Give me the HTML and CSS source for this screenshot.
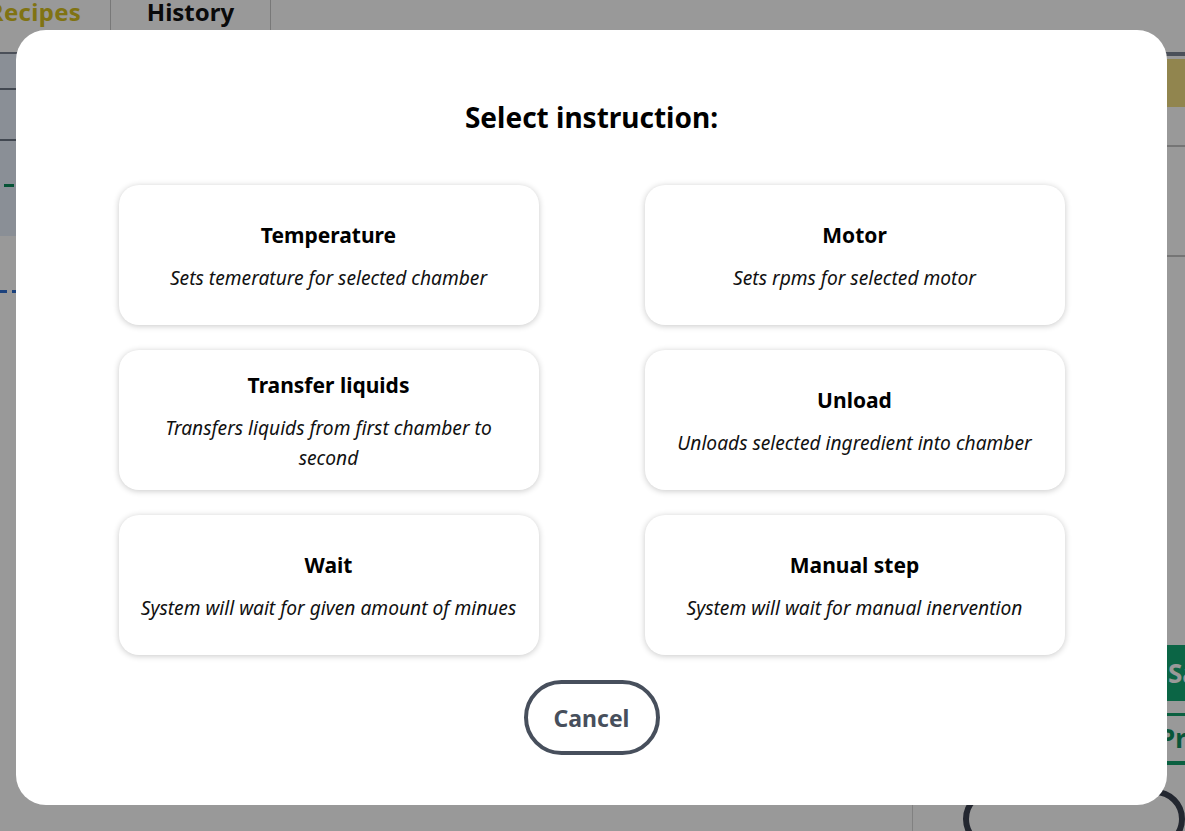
FILE: index.html
```html
<!DOCTYPE html>
<html lang="en">
<head>
<meta charset="utf-8">
<title>Select instruction</title>
<link rel="stylesheet" href="styles.css">
</head>
<body>
<div class="app">
  <nav class="tabs">
    <div class="tab tab-active">Recipes</div>
    <div class="tab">History</div>
    <div class="tab-rest"></div>
  </nav>
  <div class="content">
    <aside class="left">
      <div class="left-card">
        <div class="left-row"></div>
        <div class="left-row"></div>
        <div class="left-row left-row-last"><span class="dash-green"></span></div>
      </div>
      <div class="dash-blue"></div>
    </aside>
    <main class="main"></main>
    <aside class="right">
      <div class="right-top"></div>
      <div class="gold"></div>
      <div class="right-row"></div>
      <div class="right-row right-row-tall"></div>
      <div class="right-spacer"></div>
      <div class="save">Save</div>
      <div class="preview">Preview</div>
      <div class="dark-btn"></div>
    </aside>
  </div>
</div>

<div class="overlay">
  <div class="modal">
    <h2 class="modal-title">Select instruction:</h2>
    <div class="options">
      <div class="option">
        <div class="option-title">Temperature</div>
        <div class="option-desc">Sets temerature for selected chamber</div>
      </div>
      <div class="option">
        <div class="option-title">Motor</div>
        <div class="option-desc">Sets rpms for selected motor</div>
      </div>
      <div class="option">
        <div class="option-title">Transfer liquids</div>
        <div class="option-desc">Transfers liquids from first chamber to second</div>
      </div>
      <div class="option">
        <div class="option-title">Unload</div>
        <div class="option-desc">Unloads selected ingredient into chamber</div>
      </div>
      <div class="option">
        <div class="option-title">Wait</div>
        <div class="option-desc">System will wait for given amount of minues</div>
      </div>
      <div class="option">
        <div class="option-title">Manual step</div>
        <div class="option-desc">System will wait for manual inervention</div>
      </div>
    </div>
    <div class="actions">
      <button class="cancel" type="button">Cancel</button>
    </div>
  </div>
</div>
</body>
</html>
```

FILE: styles.css
```css
* { box-sizing: border-box; }

html, body {
  margin: 0;
  padding: 0;
  height: 100%;
  overflow: hidden;
}

body {
  font-family: "Noto Sans", "Open Sans", sans-serif;
  background: #ffffff;
  color: #000;
}

/* ---------- background app ---------- */
.app {
  height: 100%;
  display: flex;
  flex-direction: column;
}

.tabs {
  display: flex;
  height: 54px;
  border-bottom: 2px solid #7d8594;
  margin-left: -49px;
}

.tab {
  width: 160px;
  display: flex;
  justify-content: center;
  align-items: flex-start;
  font-size: 24px;
  font-weight: 700;
  line-height: 24px;
  border-right: 1px solid #c8c8c8;
  color: #111;
}

.tab-active {
  color: #d6c020;
  padding-left: 8px;
  letter-spacing: 0.3px;
}

.tab-rest { flex: 1; }

.content {
  flex: 1;
  display: flex;
}

.left {
  width: 260px;
  display: flex;
  flex-direction: column;
}

.left-card {
  background: #e6eefb;
  height: 182px;
  display: flex;
  flex-direction: column;
}

.left-row {
  height: 36px;
  border-bottom: 2px solid #6f7888;
}

.left-row + .left-row { height: 51px; }

.left-row-last {
  flex: 1;
  border-bottom: none;
  padding-top: 43px;
  padding-left: 4px;
}

.dash-green {
  display: block;
  width: 10px;
  height: 3px;
  background: #0a8a5a;
}

.dash-blue {
  margin-top: 54px;
  height: 3px;
  width: 60px;
  background: repeating-linear-gradient(90deg, #2f6fd0 0 7px, transparent 7px 12px);
}

.main { flex: 1; }

.right {
  width: 273px;
  border-left: 1px solid #d8d8d8;
  display: flex;
  flex-direction: column;
  padding-left: 50px;
}

.right-top {
  height: 5px;
  border-top: 2px solid #7d8594;
}

.gold {
  height: 48px;
  background: #f2de82;
}

.right-row {
  height: 40px;
  border-bottom: 2px solid #c4c4c4;
}

.right-row-tall { height: 110px; }

.right-spacer { flex: 1; }

.save {
  height: 56px;
  background: #13a874;
  color: #fff;
  font-weight: 700;
  font-size: 26px;
  line-height: 56px;
  padding-left: 205px;
  white-space: nowrap;
  overflow: hidden;
}

.preview {
  margin-top: 12px;
  height: 52px;
  border-top: 3px solid #12a06b;
  border-bottom: 4px solid #12a06b;
  color: #0f8f60;
  font-weight: 700;
  font-size: 26px;
  line-height: 44px;
  padding-left: 196px;
  white-space: nowrap;
  overflow: hidden;
}

.dark-btn {
  margin-top: 24px;
  height: 60px;
  border: 6px solid #3b4150;
  border-radius: 30px;
  margin-bottom: -18px;
}

/* ---------- overlay & modal ---------- */
.overlay {
  position: fixed;
  inset: 0;
  background: rgba(0, 0, 0, 0.4);
  display: flex;
  align-items: flex-start;
  padding: 30px 18px 26px 16px;
}

.modal {
  flex: 1;
  height: 775px;
  background: #ffffff;
  border-radius: 30px;
  display: flex;
  flex-direction: column;
  align-items: center;
  padding-top: 68px;
}

.modal-title {
  margin: 0;
  font-size: 28px;
  font-weight: 700;
  line-height: 38px;
  color: #000;
}

.options {
  margin-top: 49px;
  display: grid;
  grid-template-columns: 420px 420px;
  column-gap: 106px;
  row-gap: 25px;
}

.option {
  height: 140px;
  background: #fff;
  border-radius: 20px;
  box-shadow: 0 1px 6px rgba(0, 0, 0, 0.22);
  display: flex;
  flex-direction: column;
  justify-content: center;
  align-items: center;
  text-align: center;
  padding: 4px 17px 0;
}

.option-title {
  font-size: 21px;
  font-weight: 700;
  line-height: 28px;
  color: #000;
}

.option-desc {
  margin-top: 14px;
  font-size: 19.2px;
  font-style: italic;
  line-height: 30px;
  color: #111;
}

.actions {
  margin-top: 25px;
  display: flex;
  justify-content: center;
}

.cancel {
  width: 136px;
  height: 75px;
  border: 4px solid #474f5c;
  border-radius: 38px;
  background: #fff;
  font-family: inherit;
  font-size: 23px;
  font-weight: 700;
  color: #474f5c;
  cursor: pointer;
}
```
